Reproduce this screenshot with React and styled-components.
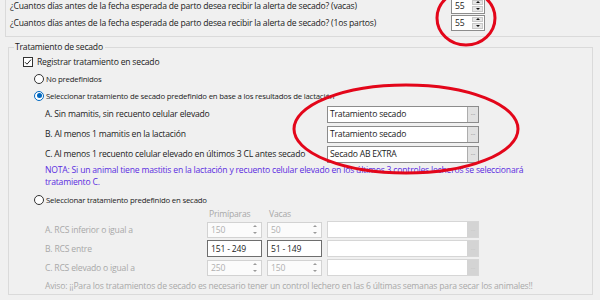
import React from "react";
import styled, { createGlobalStyle } from "styled-components";

const GlobalStyle = createGlobalStyle`
  html, body {
    margin: 0;
    padding: 0;
  }
  body {
    width: 600px;
    height: 300px;
    overflow: hidden;
    background: #f0f0f0;
    font-family: "Open Sans", "Noto Sans", sans-serif;
    font-size: 8.6px;
    letter-spacing: -0.2px;
    color: #1b1b1b;
  }
`;

const Page = styled.div`
  position: relative;
  width: 600px;
  height: 300px;
  overflow: hidden;
`;

const AlertPanel = styled.div`
  margin: -3px 0 0 5px;
  padding: 0 0 5px 4px;
  border-left: 1px solid #dadada;
  border-bottom: 1px solid #dadada;
  display: flex;
  flex-direction: column;
`;

const QuestionRow = styled.div`
  display: grid;
  grid-template-columns: 441px 34px;
  align-items: center;
  height: 17px;
  white-space: nowrap;
`;

const SpinBox = styled.div`
  display: flex;
  box-sizing: border-box;
  width: ${(p) => p.$width}px;
  height: 16px;
  background: ${(p) => (p.$disabled ? "#fbfbfb" : "#fff")};
  border: 1px solid ${(p) => (p.$disabled ? "#d2d2d2" : "#8c8c8c")};
`;

const SpinValue = styled.div`
  flex: 1;
  display: flex;
  align-items: center;
  padding-left: 3px;
  color: ${(p) => (p.$disabled ? "#b0b0b0" : "#1b1b1b")};
`;

const SpinButtons = styled.div`
  width: 11px;
  display: flex;
  flex-direction: column;
  gap: 1px;
  padding: 1px 1px 1px 0;
`;

const SpinArrow = styled.div`
  flex: 1;
  display: flex;
  align-items: center;
  justify-content: center;
  background: ${(p) => (p.$disabled ? "transparent" : "#e6e6e6")};
  border: 1px solid ${(p) => (p.$disabled ? "transparent" : "#c8c8c8")};

  &::after {
    content: "";
    border-left: 2px solid transparent;
    border-right: 2px solid transparent;
    ${(p) => (p.$down ? "border-top" : "border-bottom")}: 2px solid
      ${(p) => (p.$disabled ? "#9a9a9a" : "#111")};
  }
`;

const GroupBox = styled.fieldset`
  margin: 4px 0 0 8px;
  width: 585px;
  box-sizing: border-box;
  min-width: 0;
  padding: 0 0 2px 0;
  border: 1px solid #dadada;
`;

const GroupTitle = styled.legend`
  margin-left: 5px;
  padding: 0 2px 0 1px;
  line-height: 12px;
`;

const GroupBody = styled.div`
  padding-left: 14px;
  display: flex;
  flex-direction: column;
`;

const CheckRow = styled.label`
  display: flex;
  align-items: center;
  gap: 4px;
  height: 17px;
`;

const CheckBox = styled.span`
  box-sizing: border-box;
  width: 10px;
  height: 10px;
  border: 1px solid #333;
  background: #fff;
  display: flex;
  align-items: center;
  justify-content: center;
`;

const RadioRow = styled.label`
  display: flex;
  align-items: center;
  gap: 2px;
  height: 17px;
  padding-left: 11px;
  margin-top: ${(p) => p.$gap || 0}px;
  font-size: 7.8px;
  white-space: nowrap;
`;

const RadioDot = styled.span`
  box-sizing: border-box;
  width: 10px;
  height: 10px;
  border-radius: 50%;
  background: #fff;
  border: 1px solid ${(p) => (p.$checked ? "#0067c0" : "#333")};
  display: flex;
  align-items: center;
  justify-content: center;

  &::after {
    content: "";
    width: 5px;
    height: 5px;
    border-radius: 50%;
    background: ${(p) => (p.$checked ? "#0067c0" : "transparent")};
  }
`;

const TreatmentRow = styled.div`
  display: grid;
  grid-template-columns: 282px 152px;
  align-items: center;
  height: 20px;
  padding-left: 22px;
  white-space: nowrap;
`;

const Picker = styled.div`
  display: flex;
  box-sizing: border-box;
  width: ${(p) => p.$width || 152}px;
  height: 17px;
  background: #fff;
  border: 1px solid ${(p) => (p.$disabled ? "#d6d6d6" : "#8c8c8c")};
`;

const PickerText = styled.div`
  flex: 1;
  display: flex;
  align-items: center;
  padding-left: 2px;
`;

const BrowseButton = styled.div`
  width: 10px;
  display: flex;
  align-items: center;
  justify-content: center;
  background: ${(p) => (p.$disabled ? "#d4d4d4" : "#e1e1e1")};
  border-left: 1px solid ${(p) => (p.$disabled ? "#d4d4d4" : "#adadad")};
  color: ${(p) => (p.$disabled ? "#bcbcbc" : "#555")};
  font-size: 6px;
  letter-spacing: 0;
  line-height: 1;
`;

const Note = styled.div`
  padding-left: 22px;
  color: #5a2be0;
  line-height: 12px;
  white-space: nowrap;
`;

const TableHeader = styled.div`
  display: flex;
  gap: 5px;
  height: 12px;
  align-items: center;
  padding-left: 184px;
  color: #a8a8a8;
`;

const HeaderCell = styled.span`
  width: 53px;
  padding-left: 2px;
`;

const RangeRow = styled.div`
  display: flex;
  align-items: center;
  gap: 5px;
  height: 19px;
  padding-left: 22px;
  white-space: nowrap;
`;

const RangeLabel = styled.span`
  width: 157px;
  color: #a8a8a8;
`;

const RangeInput = styled.div`
  box-sizing: border-box;
  width: 55px;
  height: 17px;
  display: flex;
  align-items: center;
  padding-left: 3px;
  background: #fff;
  border: 1px solid #6e6e6e;
`;

const Warning = styled.div`
  margin-top: 3px;
  padding-left: 22px;
  line-height: 12px;
  color: #a9a9a9;
  white-space: nowrap;
`;

const Annotations = styled.svg`
  position: absolute;
  left: 0;
  top: 0;
  pointer-events: none;
`;

const Spinner = ({ value, width = 34, disabled }) => (
  <SpinBox $width={width} $disabled={disabled}>
    <SpinValue $disabled={disabled}>{value}</SpinValue>
    <SpinButtons>
      <SpinArrow $disabled={disabled} />
      <SpinArrow $disabled={disabled} $down />
    </SpinButtons>
  </SpinBox>
);

const TreatmentPicker = ({ value, disabled, width }) => (
  <Picker $disabled={disabled} $width={width}>
    <PickerText>{value}</PickerText>
    <BrowseButton $disabled={disabled}>···</BrowseButton>
  </Picker>
);

const TREATMENTS = [
  ["A. Sin mamitis, sin recuento celular elevado", "Tratamiento secado"],
  ["B. Al menos 1 mamitis en la lactación", "Tratamiento secado"],
  ["C. Al menos 1 recuento celular elevado en últimos 3 CL antes secado", "Secado AB EXTRA"],
];

export default function App() {
  return (
    <Page>
      <GlobalStyle />
      <AlertPanel>
        <QuestionRow>
          <span>¿Cuantos días antes de la fecha esperada de parto desea recibir la alerta de secado? (vacas)</span>
          <Spinner value="55" />
        </QuestionRow>
        <QuestionRow>
          <span>¿Cuantos días antes de la fecha esperada de parto desea recibir la alerta de secado? (1os partos)</span>
          <Spinner value="55" />
        </QuestionRow>
      </AlertPanel>

      <GroupBox>
        <GroupTitle>Tratamiento de secado</GroupTitle>
        <GroupBody>
          <CheckRow>
            <CheckBox>
              <svg width="8" height="8" viewBox="0 0 8 8">
                <path d="M1 4.2 L3 6.2 L7 1.6" fill="none" stroke="#222" strokeWidth="1" />
              </svg>
            </CheckBox>
            Registrar tratamiento en secado
          </CheckRow>
          <RadioRow>
            <RadioDot />
            No predefinidos
          </RadioRow>
          <RadioRow>
            <RadioDot $checked />
            Seleccionar tratamiento de secado predefinido en base a los resultados de lactación
          </RadioRow>
          {TREATMENTS.map(([label, value]) => (
            <TreatmentRow key={label}>
              <span>{label}</span>
              <TreatmentPicker value={value} />
            </TreatmentRow>
          ))}
          <Note>
            NOTA: Si un animal tiene mastitis en la lactación y recuento celular elevado en los últimos 3 controles lecheros se seleccionará
            <br />
            tratamiento C.
          </Note>
          <RadioRow $gap={3}>
            <RadioDot />
            Seleccionar tratamiento predefinido en secado
          </RadioRow>
          <TableHeader>
            <HeaderCell>Primíparas</HeaderCell>
            <HeaderCell>Vacas</HeaderCell>
          </TableHeader>
          <RangeRow>
            <RangeLabel>A. RCS inferior o igual a</RangeLabel>
            <Spinner value="150" width={55} disabled />
            <Spinner value="50" width={55} disabled />
            <TreatmentPicker disabled />
          </RangeRow>
          <RangeRow>
            <RangeLabel>B. RCS entre</RangeLabel>
            <RangeInput>151 - 249</RangeInput>
            <RangeInput>51 - 149</RangeInput>
            <TreatmentPicker disabled />
          </RangeRow>
          <RangeRow>
            <RangeLabel>C. RCS elevado o igual a</RangeLabel>
            <Spinner value="250" width={55} disabled />
            <Spinner value="150" width={55} disabled />
            <TreatmentPicker disabled />
          </RangeRow>
          <Warning>
            Aviso: ¡¡Para los tratamientos de secado es necesario tener un control lechero en las 6 últimas semanas para secar los animales!!
          </Warning>
        </GroupBody>
      </GroupBox>

      <Annotations width="600" height="300" viewBox="0 0 600 300">
        <ellipse cx="466" cy="18" rx="29" ry="27" fill="none" stroke="#e3061a" strokeWidth="3" />
        <ellipse cx="406" cy="129" rx="112" ry="44" fill="none" stroke="#e3061a" strokeWidth="3" />
      </Annotations>
    </Page>
  );
}
